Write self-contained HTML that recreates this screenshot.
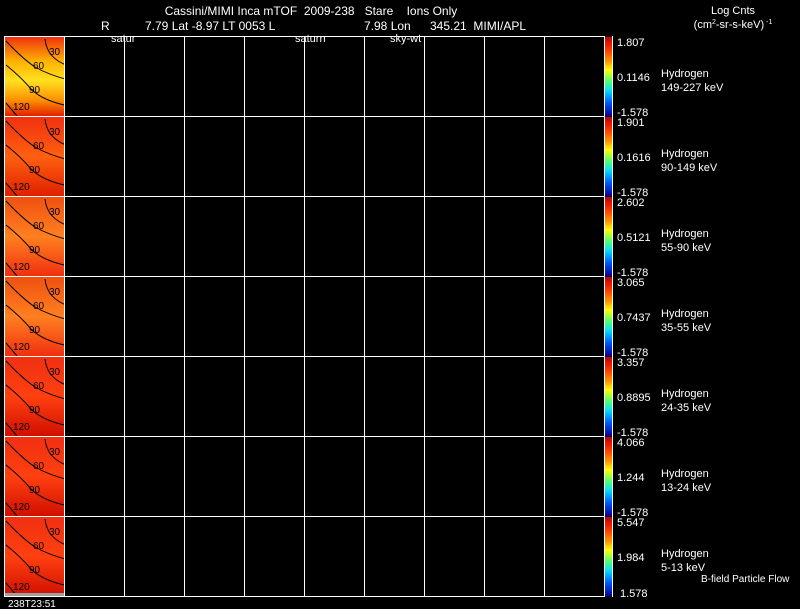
<!DOCTYPE html>
<html><head><style>
html,body{margin:0;padding:0;background:#000;}
svg{display:block}
text{font-family:"Liberation Sans",sans-serif;fill:#fff;font-size:11px;white-space:pre}
</style></head><body>
<svg width="800" height="609" viewBox="0 0 800 609" xmlns="http://www.w3.org/2000/svg" xml:space="preserve">
<defs>
<linearGradient id="cb" x1="0" y1="0" x2="0" y2="1">
<stop offset="0" stop-color="#c00000"/><stop offset="0.15" stop-color="#ff3000"/><stop offset="0.3" stop-color="#ff9000"/><stop offset="0.42" stop-color="#ffff00"/><stop offset="0.55" stop-color="#60ff60"/><stop offset="0.68" stop-color="#00e0ff"/><stop offset="0.82" stop-color="#0060ff"/><stop offset="1" stop-color="#0000a0"/>
</linearGradient>
<linearGradient id="p1" x1="0" y1="0" x2="0" y2="1">
<stop offset="0" stop-color="#f03010"/><stop offset="0.3" stop-color="#ffb000"/><stop offset="0.55" stop-color="#ffe020"/><stop offset="0.8" stop-color="#ff9000"/><stop offset="1" stop-color="#e02000"/>
</linearGradient>
<linearGradient id="p2" x1="0" y1="0" x2="0" y2="1">
<stop offset="0" stop-color="#f03010"/><stop offset="0.5" stop-color="#ff6010"/><stop offset="1" stop-color="#e02000"/>
</linearGradient>
<linearGradient id="p3" x1="0" y1="0" x2="0" y2="1">
<stop offset="0" stop-color="#f05010"/><stop offset="0.5" stop-color="#ff8020"/><stop offset="1" stop-color="#f03010"/>
</linearGradient>
<linearGradient id="p4" x1="0" y1="0" x2="0" y2="1">
<stop offset="0" stop-color="#f03010"/><stop offset="0.5" stop-color="#ff4010"/><stop offset="1" stop-color="#d01000"/>
</linearGradient>
<g id="cont" fill="none" stroke="#000" stroke-width="1">
<path d="M40 2 Q42 22 64 29"/>
<path d="M1 4 Q18 22 30 30 Q44 38 64 43"/>
<path d="M1 28 Q16 40 26 52 Q38 64 64 69"/>
<path d="M1 66 L12 79"/>
</g>
<g id="clab">
<text x="44" y="18" style="fill:#000;font-size:10px">30</text>
<text x="28" y="32" style="fill:#000;font-size:10px">60</text>
<text x="24" y="56" style="fill:#000;font-size:10px">90</text>
<text x="8" y="73" style="fill:#000;font-size:10px">120</text>
</g>
</defs>

<text x="311" y="15" text-anchor="middle" style="font-size:12px">Cassini/MIMI Inca mTOF  2009-238   Stare    Ions Only</text>
<text x="101" y="30" style="font-size:12px">R</text>
<text x="145" y="30" style="font-size:12px">7.79 Lat -8.97 LT 0053 L</text>
<text x="364" y="30" style="font-size:12px">7.98 Lon</text>
<text x="430" y="30" style="font-size:12px">345.21  MIMI/APL</text>
<text x="111" y="42">satur</text>
<text x="295" y="42">saturn</text>
<text x="390" y="42">sky-wt</text>
<text x="733" y="14" text-anchor="middle">Log Cnts</text>
<text x="733" y="28" text-anchor="middle">(cm<tspan dy="-4" font-size="7">2</tspan><tspan dy="4">-sr-s-keV)</tspan><tspan dy="-4" font-size="7"> -1</tspan></text>

<g transform="translate(5,37)"><rect width="59" height="79" fill="url(#p1)"/><use href="#cont"/><use href="#clab"/></g>
<g transform="translate(5,117)"><rect width="59" height="79" fill="url(#p2)"/><use href="#cont"/><use href="#clab"/></g>
<g transform="translate(5,197)"><rect width="59" height="79" fill="url(#p3)"/><use href="#cont"/><use href="#clab"/></g>
<g transform="translate(5,277)"><rect width="59" height="79" fill="url(#p3)"/><use href="#cont"/><use href="#clab"/></g>
<g transform="translate(5,357)"><rect width="59" height="79" fill="url(#p4)"/><use href="#cont"/><use href="#clab"/></g>
<g transform="translate(5,437)"><rect width="59" height="79" fill="url(#p4)"/><use href="#cont"/><use href="#clab"/></g>
<g transform="translate(5,517)"><rect width="59" height="79" fill="url(#p4)"/><use href="#cont"/><use href="#clab"/></g>
<rect x="5" y="593" width="59" height="4" fill="#a0a0a0"/>

<g>
<rect x="605" y="37" width="7" height="79" fill="url(#cb)"/>
<rect x="605" y="117" width="7" height="79" fill="url(#cb)"/>
<rect x="605" y="197" width="7" height="79" fill="url(#cb)"/>
<rect x="605" y="277" width="7" height="79" fill="url(#cb)"/>
<rect x="605" y="357" width="7" height="79" fill="url(#cb)"/>
<rect x="605" y="437" width="7" height="79" fill="url(#cb)"/>
<rect x="605" y="517" width="7" height="79" fill="url(#cb)"/>
</g>

<g stroke="#fff" stroke-width="1" fill="none">
<rect x="4.5" y="36.5" width="600" height="560"/>
<path d="M64.5 36V597M124.5 36V597M184.5 36V597M244.5 36V597M304.5 36V597M364.5 36V597M424.5 36V597M484.5 36V597M544.5 36V597"/>
<path d="M4 116.5H605M4 196.5H605M4 276.5H605M4 356.5H605M4 436.5H605M4 516.5H605"/>
<path d="M612.5 36V597"/>
</g>

<g>
<text x="617" y="46">1.807</text><text x="617" y="81">0.1146</text><text x="617" y="116">-1.578</text>
<text x="617" y="126">1.901</text><text x="617" y="161">0.1616</text><text x="617" y="196">-1.578</text>
<text x="617" y="206">2.602</text><text x="617" y="241">0.5121</text><text x="617" y="276">-1.578</text>
<text x="617" y="286">3.065</text><text x="617" y="321">0.7437</text><text x="617" y="356">-1.578</text>
<text x="617" y="366">3.357</text><text x="617" y="401">0.8895</text><text x="617" y="436">-1.578</text>
<text x="617" y="446">4.066</text><text x="617" y="481">1.244</text><text x="617" y="516">-1.578</text>
<text x="617" y="526">5.547</text><text x="617" y="561">1.984</text><text x="620" y="597">1.578</text>
</g>
<g>
<text x="661" y="77">Hydrogen</text><text x="661" y="91">149-227 keV</text>
<text x="661" y="157">Hydrogen</text><text x="661" y="171">90-149 keV</text>
<text x="661" y="237">Hydrogen</text><text x="661" y="251">55-90 keV</text>
<text x="661" y="317">Hydrogen</text><text x="661" y="331">35-55 keV</text>
<text x="661" y="397">Hydrogen</text><text x="661" y="411">24-35 keV</text>
<text x="661" y="477">Hydrogen</text><text x="661" y="491">13-24 keV</text>
<text x="661" y="557">Hydrogen</text><text x="661" y="571">5-13 keV</text>
<text x="701" y="582" style="font-size:10px">B-field Particle Flow</text>
</g>
<text x="8" y="607" style="font-size:10px">238T23:51</text>
</svg>
</body></html>
